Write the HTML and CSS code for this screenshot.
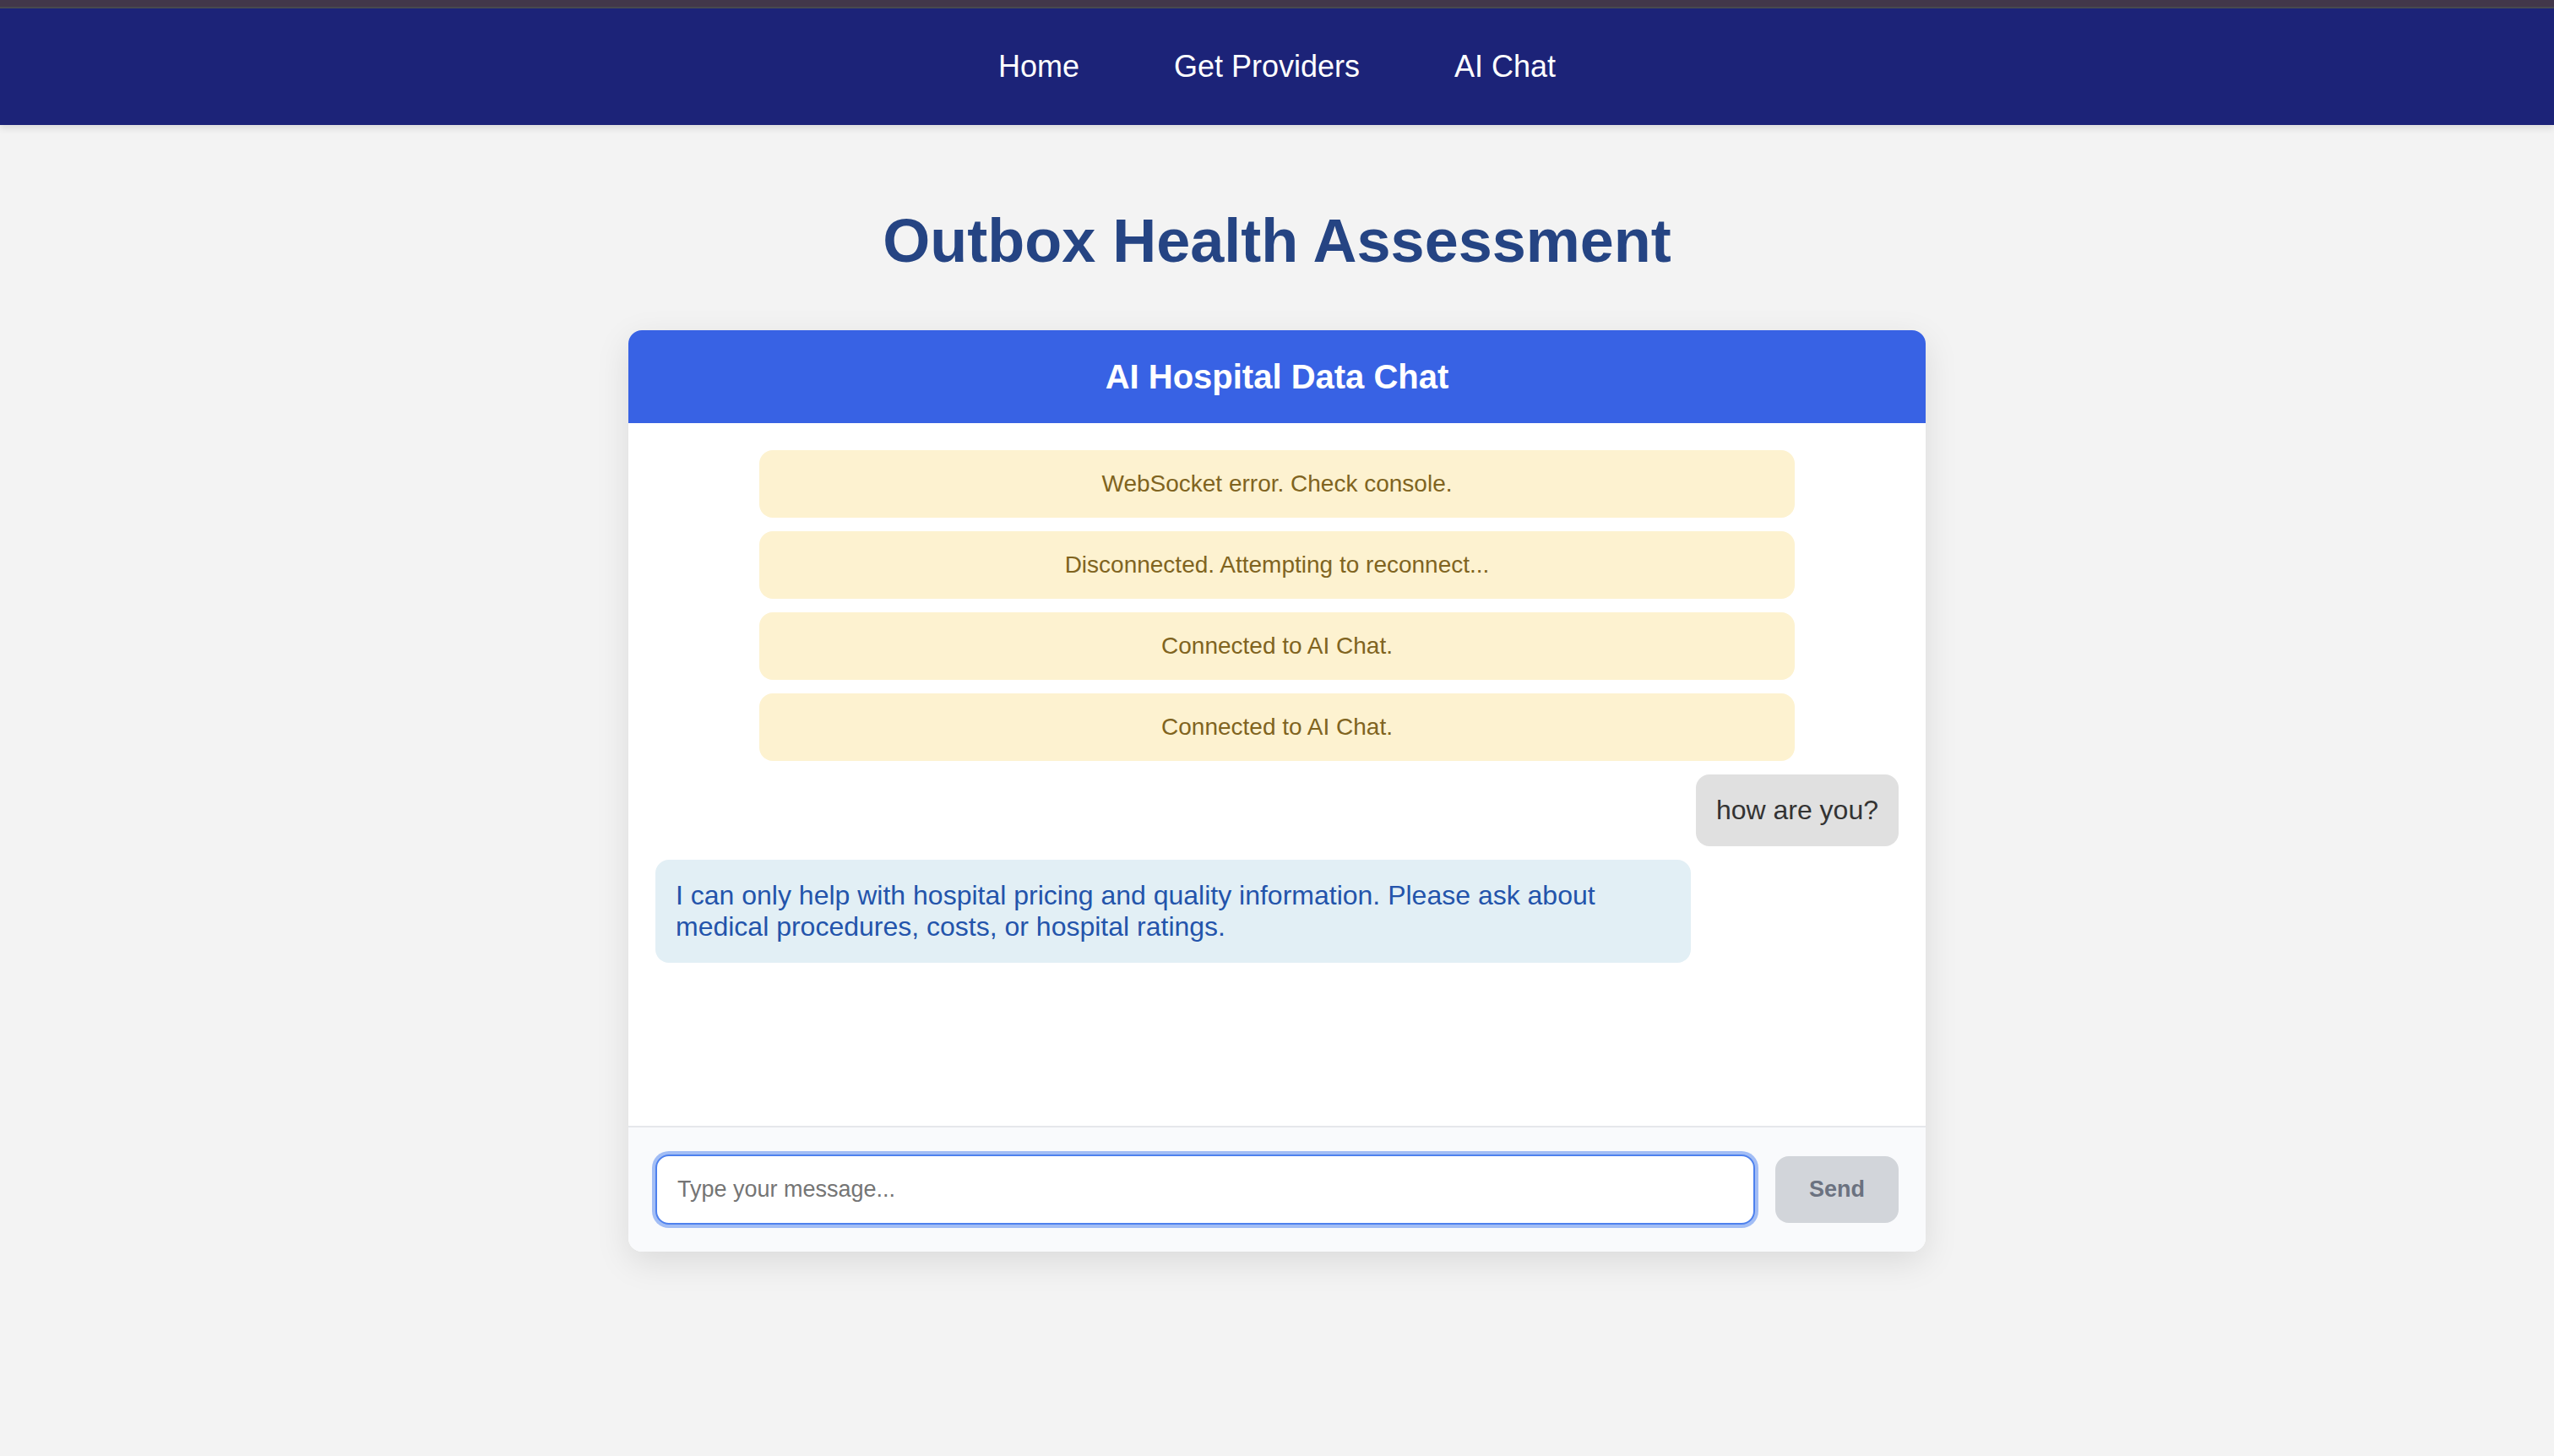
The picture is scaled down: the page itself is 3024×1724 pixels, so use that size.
FILE: index.html
```html
<!DOCTYPE html>
<html lang="en">
<head>
  <meta charset="utf-8">
  <meta name="viewport" content="width=device-width, initial-scale=1">
  <title>Outbox Health Assessment</title>
  <link rel="stylesheet" href="styles.css">
</head>
<body>
  <nav class="navbar">
    <ul class="nav-list">
      <li><a class="nav-link" href="#home">Home</a></li>
      <li><a class="nav-link" href="#providers">Get Providers</a></li>
      <li><a class="nav-link" href="#chat">AI Chat</a></li>
    </ul>
  </nav>

  <main class="page">
    <h1 class="page-title">Outbox Health Assessment</h1>

    <section class="chat" id="chat">
      <h2 class="chat-header">AI Hospital Data Chat</h2>

      <div class="messages" role="log">
        <p class="message system">WebSocket error. Check console.</p>
        <p class="message system">Disconnected. Attempting to reconnect...</p>
        <p class="message system">Connected to AI Chat.</p>
        <p class="message system">Connected to AI Chat.</p>
        <p class="message user">how are you?</p>
        <p class="message ai">I can only help with hospital pricing and quality information. Please ask about medical procedures, costs, or hospital ratings.</p>
      </div>

      <form class="composer">
        <input class="composer-input" type="text" placeholder="Type your message..." aria-label="Message">
        <button class="send-button" type="submit" disabled>Send</button>
      </form>
    </section>
  </main>
</body>
</html>
```

FILE: styles.css
```css
* {
  box-sizing: border-box;
}

body {
  margin: 0;
  border-top: 8px solid #42374a;
  background: #f3f3f3;
  color: #333;
  font-family: "Liberation Sans", Helvetica, Arial, sans-serif;
  font-size: 32px;
}

.navbar {
  padding: 48px 32px;
  border-top: 2px solid #474950;
  background: #1c2378;
  box-shadow: 0 4px 8px rgba(0, 0, 0, 0.1);
}

.nav-list {
  display: flex;
  flex-wrap: wrap;
  justify-content: center;
  gap: 16px 112px;
  margin: 0;
  padding: 0;
  list-style: none;
}

.nav-link {
  display: block;
  color: #fff;
  font-size: 36px;
  line-height: 42px;
  text-decoration: none;
}

.page {
  padding: 96px 32px;
}

.page-title {
  margin: 0 0 64px;
  color: #254483;
  font-size: 72px;
  line-height: 83px;
  text-align: center;
}

.chat {
  max-width: 1536px;
  margin: 0 auto;
  overflow: hidden;
  border-radius: 16px;
  background: #fff;
  box-shadow: 0 12px 40px rgba(0, 0, 0, 0.1);
}

.chat-header {
  margin: 0;
  padding: 32px;
  background: #3862e4;
  color: #fff;
  font-size: 40px;
  line-height: 46px;
  text-align: center;
}

.messages {
  display: flex;
  flex-direction: column;
  gap: 16px;
  min-height: 832px;
  padding: 32px;
}

.message {
  box-sizing: content-box;
  max-width: 80%;
  margin: 0;
  padding: 24px;
  border-radius: 16px;
  line-height: 37px;
}

.system {
  align-self: center;
  width: 80%;
  background: #fdf2d0;
  color: #80641f;
  font-size: 28px;
  line-height: 32px;
  text-align: center;
}

.user {
  align-self: flex-end;
  background: #e0e0e0;
}

.ai {
  align-self: flex-start;
  background: #e2eff5;
  color: #2354ab;
}

.composer {
  display: flex;
  align-items: center;
  gap: 24px;
  padding: 32px;
  border-top: 2px solid #e5e7eb;
  background: #f9fafc;
}

.composer-input,
.send-button {
  border-radius: 16px;
  font-family: inherit;
  font-size: 27px;
  line-height: 31px;
}

.composer-input {
  flex: 1;
  min-width: 0;
  height: 83px;
  padding: 24px;
  border: 2px solid #4e81ee;
  outline: none;
  background: #fff;
  box-shadow: 0 0 0 4px #a2bdf5;
}

.composer-input::placeholder {
  color: #757575;
}

.send-button {
  padding: 24px 40px;
  border: 0;
  background: #d2d5da;
  color: #6b7280;
  font-weight: 700;
}
```
